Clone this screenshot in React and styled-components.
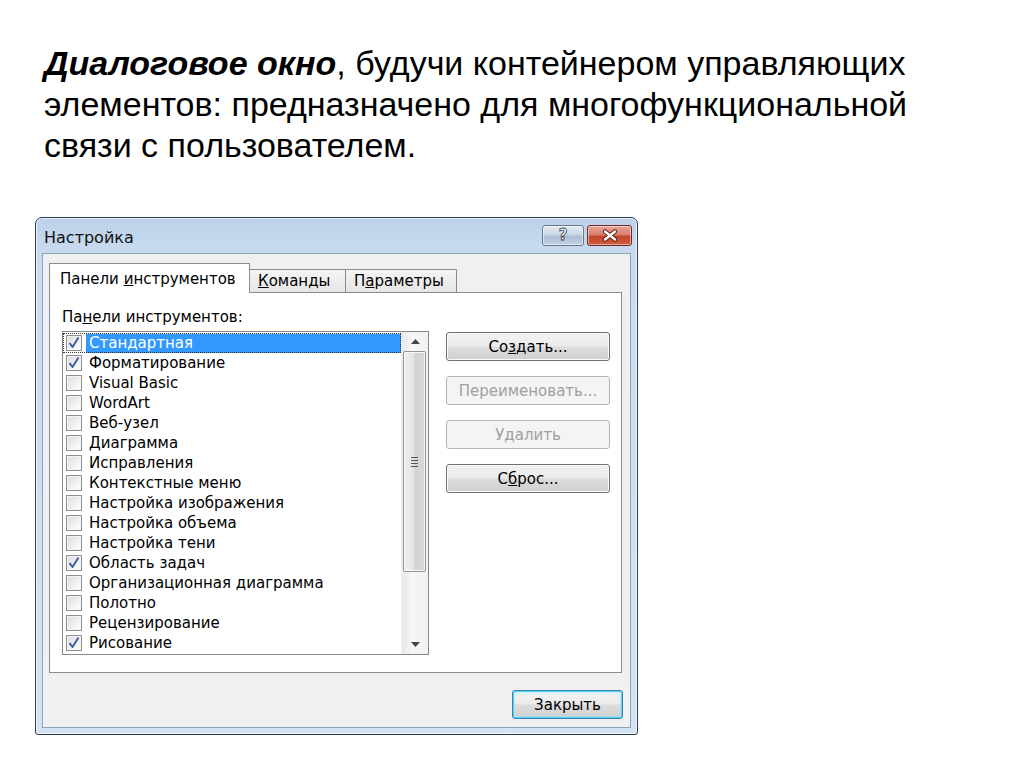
import React from "react";
import styled, { createGlobalStyle } from "styled-components";

const Global = createGlobalStyle`
  html, body { margin: 0; padding: 0; background: #ffffff; }
  body { width: 1024px; height: 768px; overflow: hidden; }
`;

const Page = styled.div`
  padding: 43px 0 0 35px;
  font-family: "Liberation Sans", Arial, sans-serif;
`;

const Heading = styled.p`
  margin: 0 0 51px 9px;
  font-size: 34px;
  line-height: 41px;
  height: 123px;
  color: #000;
  white-space: nowrap;
  b { font-weight: bold; font-style: italic; }
`;

const Frame = styled.div`
  width: 603px;
  height: 518px;
  box-sizing: border-box;
  border: 1px solid #2d3d52;
  border-radius: 7px 7px 3px 3px;
  background: linear-gradient(to bottom, #bcd2ea 0, #c9dbef 36px, #d4e3f3 100%);
  box-shadow: inset 0 0 0 1px rgba(255, 255, 255, 0.7);
  padding: 0 6px 6px 6px;
  display: flex;
  flex-direction: column;
  font-family: "DejaVu Sans", Verdana, sans-serif;
`;

const TitleBar = styled.div`
  height: 35px;
  display: flex;
  align-items: flex-start;
  justify-content: space-between;
`;

const TitleText = styled.div`
  margin: 10px 0 0 2px;
  font-size: 16px;
  color: #111;
`;

const TitleButtons = styled.div`
  display: flex;
  gap: 3px;
  margin: 7px -1px 0 0;
`;

const CaptionButton = styled.div`
  width: ${(p) => p.w}px;
  height: 21px;
  box-sizing: border-box;
  border: 1px solid ${(p) => (p.red ? "#6e2a22" : "#6a7686")};
  border-radius: 3px;
  display: flex;
  align-items: center;
  justify-content: center;
  background: ${(p) =>
    p.red
      ? "linear-gradient(to bottom, #e8a597 0, #d8806d 45%, #c4452e 55%, #d05a3c 100%)"
      : "linear-gradient(to bottom, #e4ecf5 0, #c9d6e5 45%, #aebfd3 55%, #c2d3e6 100%)"};
  box-shadow: inset 0 0 0 1px rgba(255, 255, 255, 0.5);
`;

const HelpGlyph = styled.span`
  font-family: "DejaVu Sans", sans-serif;
  font-size: 15px;
  line-height: 17px;
  font-weight: bold;
  color: #eef3f8;
  -webkit-text-stroke: 0.8px #3e4a58;
`;

const Body = styled.div`
  flex: 1;
  background: #f0f0f0;
  border: 1px solid #8ea3bd;
  padding: 10px 8px 0 6px;
  display: flex;
  flex-direction: column;
`;

const TabRow = styled.div`
  display: flex;
  align-items: flex-end;
  height: 29px;
  margin-bottom: -1px;
  position: relative;
  z-index: 1;
`;

const Tab = styled.div`
  width: ${(p) => p.w}px;
  height: ${(p) => (p.active ? 30 : 24)}px;
  box-sizing: border-box;
  border: 1px solid #898c95;
  border-bottom: ${(p) => (p.active ? "none" : "1px solid #898c95")};
  margin-left: ${(p) => (p.first ? 0 : -1)}px;
  background: ${(p) =>
    p.active ? "#ffffff" : "linear-gradient(to bottom, #f4f4f4 0, #e6e6e6 100%)"};
  font-size: 15px;
  color: #000;
  display: flex;
  align-items: center;
  padding-left: ${(p) => (p.active ? 10 : 8)}px;
  white-space: nowrap;
`;

const Panel = styled.div`
  height: 381px;
  box-sizing: border-box;
  border: 1px solid #898c95;
  background: #ffffff;
  padding: 15px 12px 0 12px;
  display: flex;
  gap: 17px;
`;

const LeftCol = styled.div`
  display: flex;
  flex-direction: column;
`;

const Label = styled.div`
  font-size: 15px;
  line-height: 19px;
  height: 19px;
  margin-bottom: 4px;
  color: #000;
`;

const ListBox = styled.div`
  width: 367px;
  height: 324px;
  box-sizing: border-box;
  border: 1px solid #828790;
  display: flex;
  background: #fff;
`;

const Items = styled.div`
  flex: 1;
  padding-top: 1px;
  display: flex;
  flex-direction: column;
`;

const Item = styled.div`
  height: 20px;
  display: flex;
  align-items: center;
  box-sizing: border-box;
  padding-left: 3px;
  outline: ${(p) => (p.focus ? "1px dotted #333" : "none")};
  outline-offset: -1px;
`;

const Box = styled.div`
  width: 16px;
  height: 16px;
  box-sizing: border-box;
  border: 1px solid #8e8f8f;
  background: linear-gradient(135deg, #dcdcdc 0, #f2f2f2 60%, #ffffff 100%);
  box-shadow: inset 0 0 0 1px #f4f4f4;
  display: flex;
  align-items: center;
  justify-content: center;
  flex-shrink: 0;
`;

const ItemText = styled.div`
  margin-left: 4px;
  flex: 1;
  height: 19px;
  line-height: 19px;
  padding-left: 3px;
  font-size: 15px;
  white-space: nowrap;
  color: ${(p) => (p.selected ? "#ffffff" : "#000")};
  background: ${(p) => (p.selected ? "#3399ff" : "transparent")};
`;

const ScrollBar = styled.div`
  width: 26px;
  display: flex;
  flex-direction: column;
  background: linear-gradient(to right, #e8e8e8 0, #f6f6f6 40%, #f1f1f1 100%);
  border-left: 1px solid #f0f0f0;
`;

const ArrowBtn = styled.div`
  height: 19px;
  display: flex;
  align-items: center;
  justify-content: center;
`;

const Thumb = styled.div`
  margin: 0 2px 0 1px;
  height: 221px;
  box-sizing: border-box;
  border: 1px solid #979797;
  border-radius: 2px;
  background: linear-gradient(to right, #f1f1f1 0, #e4e4e4 45%, #d2d2d2 55%, #d8d8d8 100%);
  box-shadow: inset 0 0 0 1px #f7f7f7;
  display: flex;
  align-items: center;
  justify-content: center;
`;

const Grip = styled.div`
  display: flex;
  flex-direction: column;
  gap: 2px;
  span {
    display: block;
    width: 7px;
    height: 1px;
    background: #555;
  }
`;

const Track = styled.div`
  flex: 1;
`;

const RightCol = styled.div`
  padding-top: 24px;
  display: flex;
  flex-direction: column;
  gap: 15px;
`;

const Button = styled.div`
  width: ${(p) => p.w}px;
  height: ${(p) => p.h}px;
  box-sizing: border-box;
  border: 1px solid ${(p) => (p.disabled ? "#b5b5b5" : p.def ? "#3c7fb1" : "#707070")};
  border-radius: 3px;
  display: flex;
  align-items: center;
  justify-content: center;
  font-size: 15px;
  color: ${(p) => (p.disabled ? "#a0a0a0" : "#000")};
  background: ${(p) =>
    p.disabled
      ? "#f4f4f4"
      : "linear-gradient(to bottom, #f2f2f2 0, #ebebeb 49%, #dddddd 51%, #cfcfcf 100%)"};
  box-shadow: ${(p) =>
    p.disabled
      ? "none"
      : p.def
      ? "inset 0 0 0 1px #48d8fb, inset 0 0 3px 1px #a5e4f8"
      : "inset 0 0 0 1px #fcfcfc"};
  white-space: nowrap;
`;

const Footer = styled.div`
  display: flex;
  justify-content: flex-end;
  padding-top: 17px;
  margin-right: -1px;
`;

const Check = () => (
  <svg width="14" height="14" viewBox="0 0 14 14">
    <path d="M2.5 7 L5.5 11 L11.5 1.5" fill="none" stroke="#3b5a9a" strokeWidth="1.9" strokeLinejoin="round" />
  </svg>
);

const items = [
  ["Стандартная", true],
  ["Форматирование", true],
  ["Visual Basic", false],
  ["WordArt", false],
  ["Веб-узел", false],
  ["Диаграмма", false],
  ["Исправления", false],
  ["Контекстные меню", false],
  ["Настройка изображения", false],
  ["Настройка объема", false],
  ["Настройка тени", false],
  ["Область задач", true],
  ["Организационная диаграмма", false],
  ["Полотно", false],
  ["Рецензирование", false],
  ["Рисование", true],
];

export default function App() {
  return (
    <Page>
      <Global />
      <Heading>
        <b>Диалоговое окно</b>, будучи контейнером управляющих
        <br />
        элементов: предназначено для многофункциональной
        <br />
        связи с пользователем.
      </Heading>
      <Frame>
        <TitleBar>
          <TitleText>Настройка</TitleText>
          <TitleButtons>
            <CaptionButton w={42}>
              <HelpGlyph>?</HelpGlyph>
            </CaptionButton>
            <CaptionButton w={45} red>
              <svg width="18" height="13" viewBox="0 0 18 13">
                <path d="M4 2.5 L14 10.5 M14 2.5 L4 10.5" stroke="#5a1d14" strokeWidth="4.2" strokeLinecap="round" />
                <path d="M4 2.5 L14 10.5 M14 2.5 L4 10.5" stroke="#ffffff" strokeWidth="2.4" strokeLinecap="round" />
              </svg>
            </CaptionButton>
          </TitleButtons>
        </TitleBar>
        <Body>
          <TabRow>
            <Tab w={201} active first>
              <span>
                Панели <u>и</u>нструментов
              </span>
            </Tab>
            <Tab w={97}>
              <span>
                <u>К</u>оманды
              </span>
            </Tab>
            <Tab w={112}>
              <span>
                П<u>а</u>раметры
              </span>
            </Tab>
          </TabRow>
          <Panel>
            <LeftCol>
              <Label>
                Па<u>н</u>ели инструментов:
              </Label>
              <ListBox>
                <Items>
                  {items.map(([name, checked], i) => (
                    <Item key={name} focus={i === 0}>
                      <Box>{checked && <Check />}</Box>
                      <ItemText selected={i === 0}>{name}</ItemText>
                    </Item>
                  ))}
                </Items>
                <ScrollBar>
                  <ArrowBtn>
                    <svg width="9" height="5" viewBox="0 0 9 5">
                      <path d="M0 5 L4.5 0 L9 5 Z" fill="#444" />
                    </svg>
                  </ArrowBtn>
                  <Thumb>
                    <Grip>
                      <span />
                      <span />
                      <span />
                      <span />
                    </Grip>
                  </Thumb>
                  <Track />
                  <ArrowBtn>
                    <svg width="9" height="5" viewBox="0 0 9 5">
                      <path d="M0 0 L9 0 L4.5 5 Z" fill="#444" />
                    </svg>
                  </ArrowBtn>
                </ScrollBar>
              </ListBox>
            </LeftCol>
            <RightCol>
              <Button w={164} h={29}>
                <span>
                  Со<u>з</u>дать...
                </span>
              </Button>
              <Button w={164} h={29} disabled>
                <span>Переименовать...</span>
              </Button>
              <Button w={164} h={29} disabled>
                <span>Удалить</span>
              </Button>
              <Button w={164} h={29}>
                <span>
                  С<u>б</u>рос...
                </span>
              </Button>
            </RightCol>
          </Panel>
          <Footer>
            <Button w={111} h={29} def>
              <span>Закрыть</span>
            </Button>
          </Footer>
        </Body>
      </Frame>
    </Page>
  );
}
